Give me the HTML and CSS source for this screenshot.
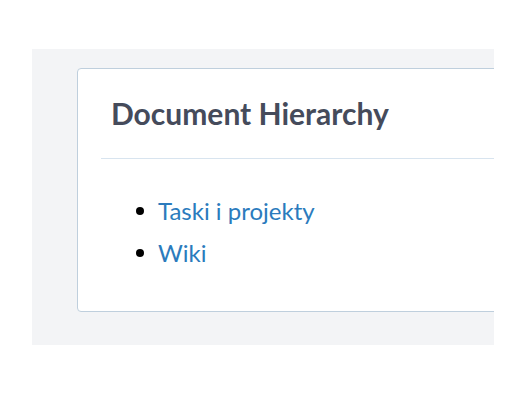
FILE: index.html
```html
<!DOCTYPE html>
<html lang="en">
<head>
    <meta charset="UTF-8">
    <meta name="viewport" content="width=device-width, initial-scale=1.0">
    <title>Document Hierarchy</title>
    <link rel="stylesheet" href="styles.css">
</head>
<body>

    <div class="panel">
        <div class="card">
            <div class="card-header">
                <h2>Document Hierarchy</h2>
            </div>
            <ul class="doc-list">
                <li><span class="dot"></span><a href="#">Taski i projekty</a></li>
                <li><span class="dot"></span><a href="#">Wiki</a></li>
            </ul>
        </div>
    </div>

</body>
</html>
```

FILE: styles.css
```css
body {
    margin: 0;
    background: #ffffff;
    font-family: Lato, 'Noto Sans', sans-serif;
}

.panel {
    margin: 49px 0 0 32px;
    width: 462px;
    height: 296px;
    box-sizing: border-box;
    padding: 19px 0 0 45px;
    background-color: #f3f4f6;
    overflow: hidden;
}

.card {
    width: 520px;
    height: 244px;
    box-sizing: border-box;
    background-color: #ffffff;
    border: 1px solid #bfcfdd;
    border-radius: 4px;
}

.card-header {
    margin-left: 23px;
    padding: 26px 0 27px 10px;
    border-bottom: 1px solid #d8e4ef;
}

.card-header h2 {
    margin: 0;
    font-size: 30px;
    line-height: 36px;
    font-weight: bold;
    color: #454b5b;
}

.doc-list {
    list-style: none;
    margin: 31px 0 0 0;
    padding: 0 0 0 58px;
}

.doc-list li {
    display: flex;
    align-items: center;
    gap: 14px;
    font-size: 24px;
    line-height: 42px;
}

.dot {
    width: 8px;
    height: 8px;
    border-radius: 50%;
    background-color: #000000;
}

.doc-list a {
    color: #2b7bbd;
    text-decoration: none;
}
```
